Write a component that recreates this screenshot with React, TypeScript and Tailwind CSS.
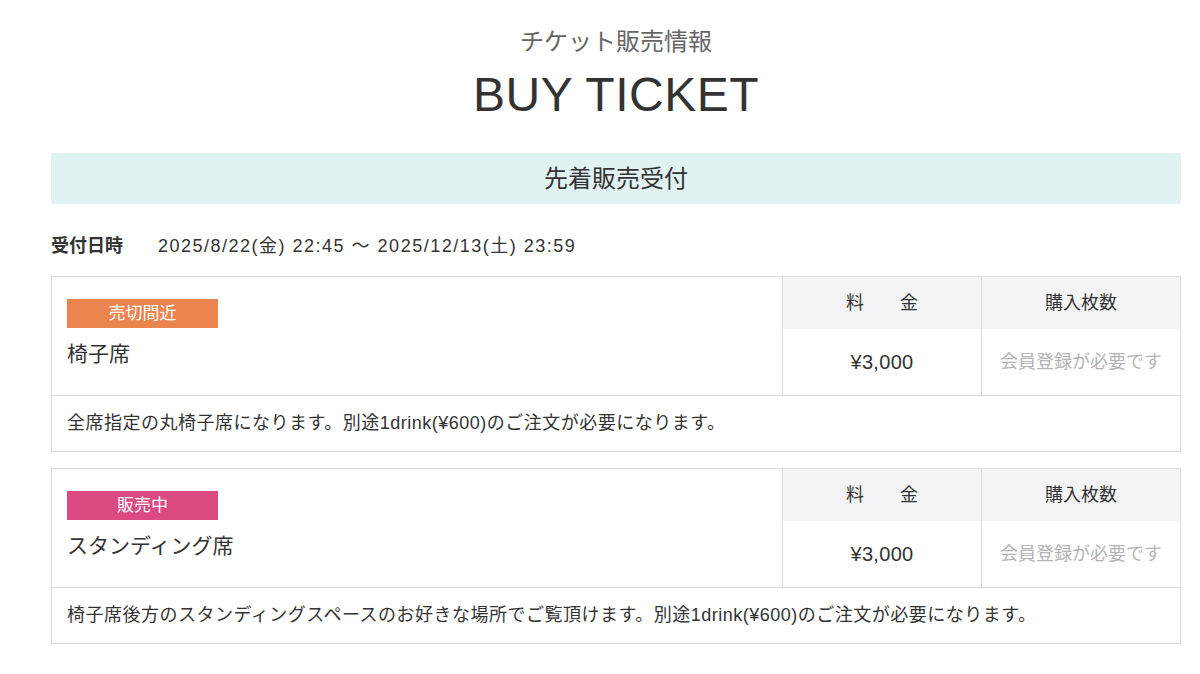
const font = { fontFamily: '"Liberation Sans", "Noto Sans CJK JP", sans-serif' };

type Ticket = {
  badge: string;
  badgeColor: string;
  name: string;
  price: string;
  note: string;
};

const tickets: Ticket[] = [
  {
    badge: "売切間近",
    badgeColor: "bg-[#ec8450]",
    name: "椅子席",
    price: "¥3,000",
    note: "全席指定の丸椅子席になります。別途1drink(¥600)のご注文が必要になります。",
  },
  {
    badge: "販売中",
    badgeColor: "bg-[#db4a80]",
    name: "スタンディング席",
    price: "¥3,000",
    note: "椅子席後方のスタンディングスペースのお好きな場所でご覧頂けます。別途1drink(¥600)のご注文が必要になります。",
  },
];

const TicketTable = ({ badge, badgeColor, name, price, note }: Ticket) => {
  return (
    <div className="border border-[#dcdcdc] bg-white">
      <div className="flex">
        <div className="flex-1 pl-[15px] pt-[22px]">
          <div
            className={`w-[151px] h-[29px] flex items-center justify-center text-white text-[17px] ${badgeColor}`}
          >
            {badge}
          </div>
          <div className="mt-[11px] text-[21px] leading-[30px] text-[#333]">{name}</div>
        </div>

        <div className="w-[199px] border-l border-[#dcdcdc] flex flex-col">
          <div className="h-[52px] bg-[#f4f4f6] flex items-center justify-center text-[18px] text-[#333]">
            料　　金
          </div>
          <div className="h-[66px] flex items-center justify-center text-[20px] tracking-[0.3px] text-[#333]">
            {price}
          </div>
        </div>

        <div className="w-[199px] border-l border-[#dcdcdc] flex flex-col">
          <div className="h-[52px] bg-[#f4f4f6] flex items-center justify-center text-[18px] text-[#333]">
            購入枚数
          </div>
          <div className="h-[66px] flex items-center justify-center text-[18px] text-[#b3b3b3]">
            会員登録が必要です
          </div>
        </div>
      </div>

      <div className="border-t border-[#dcdcdc] h-[56px] px-[15px] flex items-center text-[18px] tracking-[0.5px] text-[#333]">
        {note}
      </div>
    </div>
  );
};

export default function App() {
  return (
    <div style={font} className="min-h-[674px] bg-white text-[#333]">
      <div className="ml-[51px] w-[1130px] pt-[27px]">
        <div className="text-center text-[24px] text-[#666] leading-[30px]">チケット販売情報</div>
        <div className="text-center text-[48px] leading-[56px] mt-[10px] tracking-[0.5px] text-[#333]">
          BUY TICKET
        </div>

        <div className="mt-[30px] h-[51px] bg-[#e0f2f2] flex items-center justify-center text-[24px] text-[#333]">
          先着販売受付
        </div>

        <div className="mt-[30px] flex items-center h-[24px]">
          <span className="w-[107px] font-bold text-[18px]">受付日時</span>
          <span className="text-[18px] tracking-[1.5px]">2025/8/22(金) 22:45 ～ 2025/12/13(土) 23:59</span>
        </div>

        <div className="mt-[18px] flex flex-col gap-[16px]">
          {tickets.map((t) => (
            <TicketTable key={t.name} {...t} />
          ))}
        </div>
      </div>
    </div>
  );
}
